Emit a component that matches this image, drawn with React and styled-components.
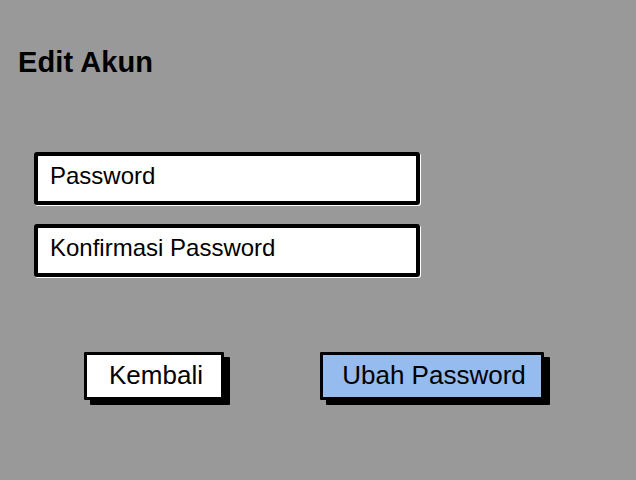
import React from "react";
import styled, { createGlobalStyle } from "styled-components";

const Global = createGlobalStyle`
  html, body { margin: 0; padding: 0; background: #999999; }
  body { font-family: "Liberation Sans", Arial, sans-serif; color: #000; }
`;

const Page = styled.div`
  width: 636px;
  height: 480px;
  box-sizing: border-box;
  padding: 46px 0 0 18px;
  display: flex;
  flex-direction: column;
  background: #999999;
  overflow: hidden;
`;

const Title = styled.h1`
  margin: 0;
  font-size: 29px;
  line-height: 32px;
  font-weight: 700;
  letter-spacing: 0.1px;
`;

const Fields = styled.div`
  margin: 74px 0 0 16px;
  display: flex;
  flex-direction: column;
  gap: 19px;
`;

const Field = styled.div`
  width: 386px;
  height: 53px;
  box-sizing: border-box;
  background: #fff;
  border: 4px solid #000;
  border-radius: 3px;
  box-shadow: 1px 1px 0 #fff;
  padding: 0 0 6px 12px;
  font-size: 24px;
  line-height: 39px;
`;

const Actions = styled.div`
  margin: 75px 0 0 66px;
  display: flex;
  gap: 96px;
`;

const Button = styled.button`
  width: ${(p) => p.$w}px;
  height: 48px;
  box-sizing: border-box;
  background: ${(p) => (p.$primary ? "#95bbef" : "#ffffff")};
  border: 3px solid #000;
  border-radius: 1px;
  box-shadow: 6px 5px 0 #000;
  font-family: "Liberation Sans", Arial, sans-serif;
  font-size: 26px;
  color: #000;
  padding: 0 0 2px 4px;
  line-height: 40px;
  cursor: pointer;
`;

export default function App() {
  return (
    <>
      <Global />
      <Page>
        <Title>Edit Akun</Title>
        <Fields>
          <Field>Password</Field>
          <Field>Konfirmasi Password</Field>
        </Fields>
        <Actions>
          <Button $w={140}>Kembali</Button>
          <Button $w={224} $primary>Ubah Password</Button>
        </Actions>
      </Page>
    </>
  );
}
